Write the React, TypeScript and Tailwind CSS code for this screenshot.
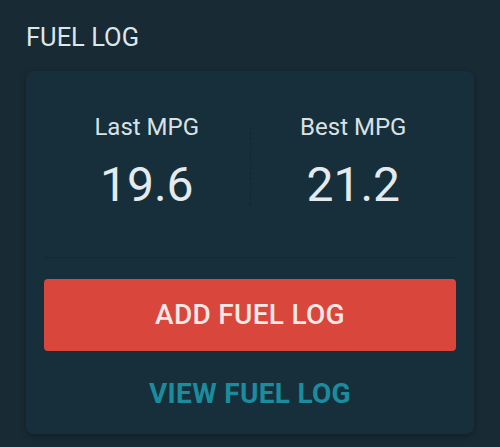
import React from "react";

const stats = [
  { label: "Last MPG", value: "19.6" },
  { label: "Best MPG", value: "21.2" },
];

function Stat({ label, value }: { label: string; value: string }) {
  return (
    <div className="flex-1 flex flex-col items-center">
      <span className="text-[24px] leading-[28px] text-[#d9e1e5]">{label}</span>
      <span className="mt-[18px] text-[48px] leading-[52px] text-[#e4eaed]">{value}</span>
    </div>
  );
}

export default function App() {
  return (
    <div className="w-[500px] h-[447px] bg-[#182a33] font-['Roboto',sans-serif] overflow-hidden">
      <div className="px-[26px] pt-[22px]">
        <h2 className="text-[25.5px] leading-[30px] text-[#dfe6e9]">FUEL LOG</h2>

        {/* Card */}
        <div className="mt-[19px] rounded-lg bg-[#162f3b] shadow-[0_2px_6px_rgba(0,0,0,0.25)] px-[18px] pb-[24px]">
          <div className="flex items-center border-b border-dotted border-[#12262f] pt-[42px] pb-[46px]">
            <Stat {...stats[0]} />
            <div className="w-0 h-[78px] mt-[8px] border-l border-dashed border-[#12262f]" />
            <Stat {...stats[1]} />
          </div>

          <button className="mt-[21px] w-full h-[72px] rounded-[4px] bg-[#d9463c] text-[#f6e8e6] text-[28px] font-medium tracking-[0.3px]">
            ADD FUEL LOG
          </button>

          <div className="mt-[27px] text-center text-[28px] leading-[32px] font-bold text-[#1b8c9d] tracking-[0.3px]">
            VIEW FUEL LOG
          </div>
        </div>
      </div>
    </div>
  );
}
